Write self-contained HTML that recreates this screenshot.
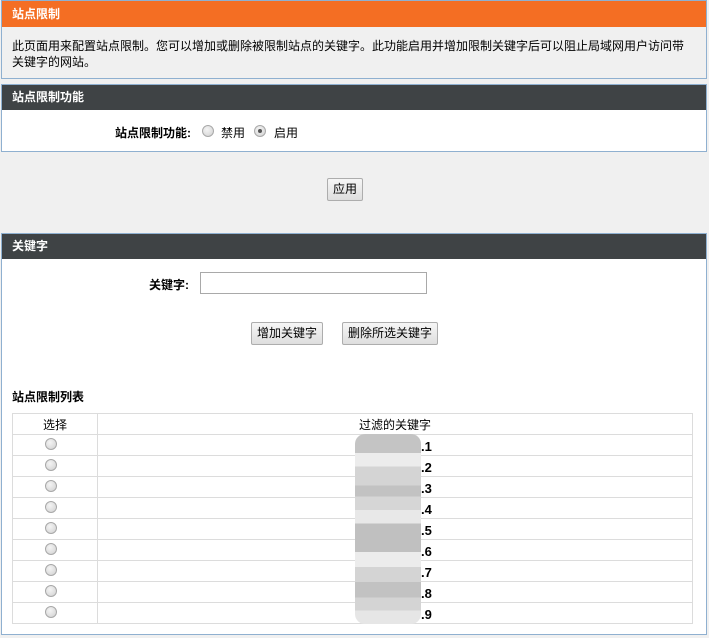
<!DOCTYPE html>
<html><head><meta charset="utf-8"><style>
*{box-sizing:border-box;margin:0;padding:0}
body{width:709px;height:638px;background:#f0f0f0;font-family:"Liberation Sans","Noto Sans CJK SC",sans-serif;font-size:12px;color:#000;position:relative;overflow:hidden}
.a{position:absolute}
.box{position:absolute;left:1px;width:706px;border:1px solid #8fb0d0}
.hd{height:25px;line-height:25px;color:#fff;font-weight:bold;padding-left:10px;font-size:12px}
.btn{position:absolute;height:23px;border:1px solid #adadad;background:linear-gradient(#f6f6f6,#dedede);border-radius:2px;text-align:center;line-height:21px;font-size:12px}
.radio{position:absolute;width:12px;height:12px;border-radius:50%;border:1px solid #a8a8a8;background:radial-gradient(circle at 40% 35%,#f4f4f4,#d0d0d0)}
table{border-collapse:collapse;position:absolute;left:12px;top:413px;width:681px}
td{border:1px solid #dcdcdc;height:21px;padding:0}
</style></head><body>
<div class="box" style="top:0;height:79px;background:#f0f0f0">
 <div class="hd" style="background:#f46e23;height:26px;line-height:26px">站点限制</div>
 <div class="a" style="left:10px;top:37px;line-height:16px;width:676px">此页面用来配置站点限制。您可以增加或删除被限制站点的关键字。此功能启用并增加限制关键字后可以阻止局域网用户访问带关键字的网站。</div>
</div>
<div class="box" style="top:84px;height:68px;background:#fff">
 <div class="hd" style="background:#3f4345">站点限制功能</div>
 <div class="a" style="left:113px;top:39px;font-weight:bold">站点限制功能:</div>
 <div class="radio" style="left:200px;top:40px"></div>
 <div class="a" style="left:219px;top:39px">禁用</div>
 <div class="radio" style="left:252px;top:40px"><div style="position:absolute;left:3px;top:3px;width:4px;height:4px;border-radius:50%;background:#555"></div></div>
 <div class="a" style="left:272px;top:39px">启用</div>
</div>
<div class="btn" style="left:327px;top:178px;width:36px">应用</div>
<div class="box" style="top:233px;height:402px;background:#fff">
 <div class="hd" style="background:#3f4345">关键字</div>
</div>
<div class="a" style="left:149px;top:276px;font-weight:bold">关键字:</div>
<div class="a" style="left:200px;top:272px;width:227px;height:22px;border:1px solid #a9a9a9;background:#fff"></div>
<div class="btn" style="left:251px;top:322px;width:72px">增加关键字</div>
<div class="btn" style="left:342px;top:322px;width:96px">删除所选关键字</div>
<div class="a" style="left:12px;top:388px;font-weight:bold">站点限制列表</div>
<table>
<tr><td style="width:85px;text-align:center">选择</td><td style="text-align:center">过滤的关键字</td></tr>
<tr><td></td><td></td></tr><tr><td></td><td></td></tr><tr><td></td><td></td></tr>
<tr><td></td><td></td></tr><tr><td></td><td></td></tr><tr><td></td><td></td></tr>
<tr><td></td><td></td></tr><tr><td></td><td></td></tr><tr><td></td><td></td></tr>
</table>
<div class="radio" style="left:45px;top:438px"></div>
<div class="radio" style="left:45px;top:459px"></div>
<div class="radio" style="left:45px;top:480px"></div>
<div class="radio" style="left:45px;top:501px"></div>
<div class="radio" style="left:45px;top:522px"></div>
<div class="radio" style="left:45px;top:543px"></div>
<div class="radio" style="left:45px;top:564px"></div>
<div class="radio" style="left:45px;top:585px"></div>
<div class="radio" style="left:45px;top:606px"></div>
<div class="a" style="left:355px;top:434px;width:66px;height:190px;border-radius:10px;background:linear-gradient(#c4c4c4 0,#c4c4c4 10%,#ececec 10%,#ececec 17%,#d4d4d4 17%,#d4d4d4 27%,#c2c2c2 27%,#c2c2c2 33%,#d6d6d6 33%,#d6d6d6 40%,#e8e8e8 40%,#e8e8e8 47%,#c0c0c0 47%,#c0c0c0 62%,#ececec 62%,#ececec 70%,#d4d4d4 70%,#d4d4d4 78%,#c2c2c2 78%,#c2c2c2 86%,#d4d4d4 86%,#d4d4d4 93%,#e6e6e6 93%)"></div>
<div class="a" style="left:421px;top:436px;font-weight:bold;line-height:21px;font-size:13px">.1<br>.2<br>.3<br>.4<br>.5<br>.6<br>.7<br>.8<br>.9</div>
</body></html>
